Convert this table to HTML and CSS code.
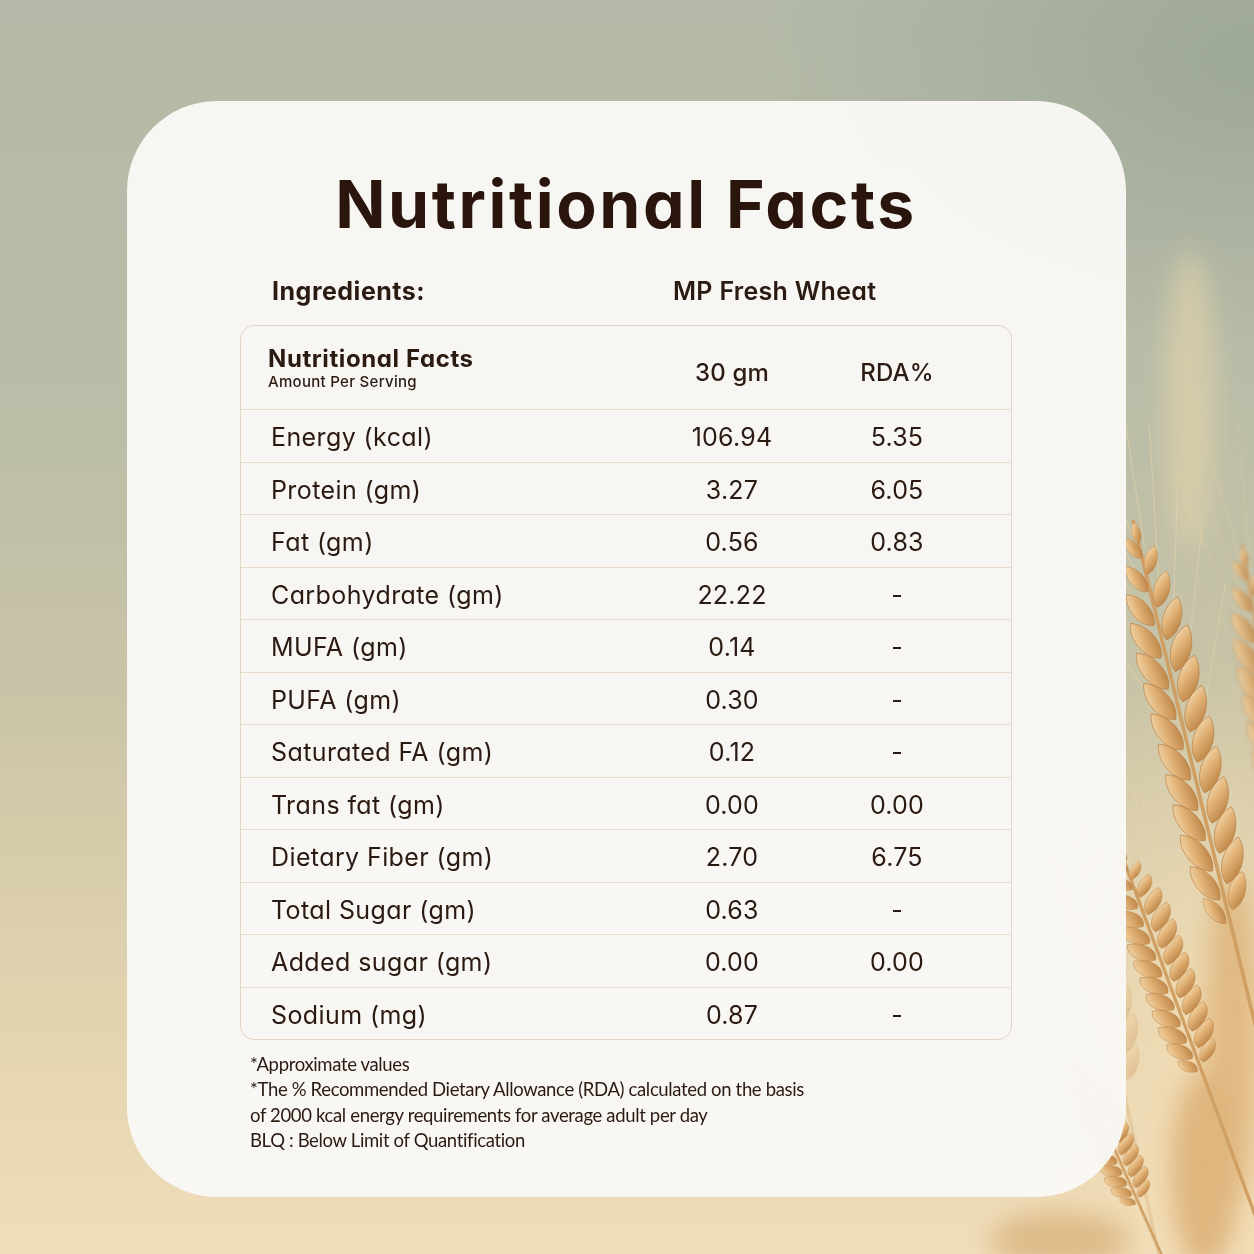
FILE: index.html
```html
<!DOCTYPE html>
<html lang="en">
<head>
<meta charset="utf-8">
<title>Nutritional Facts</title>
<link rel="stylesheet" href="styles.css">
</head>
<body>
<div class="stage">
  <svg class="wheat" width="1254" height="1254" viewBox="0 0 1254 1254" aria-hidden="true">
    <defs>
      <linearGradient id="grain" x1="0" y1="0" x2="1" y2="1">
        <stop offset="0" stop-color="#f9e3bb"/>
        <stop offset=".45" stop-color="#e0b175"/>
        <stop offset="1" stop-color="#b37738"/>
      </linearGradient>
      <filter id="blur" x="-50%" y="-50%" width="200%" height="200%"><feGaussianBlur stdDeviation="12"/></filter>
      <filter id="soft" x="-20%" y="-20%" width="140%" height="140%"><feGaussianBlur stdDeviation="1.5"/></filter>
      <path id="gr" d="M0 -22 C 11 -12 11 10 0 18 C -11 10 -11 -12 0 -22Z"/>
      <g id="ear">
        <path d="M0 0 L0 760" stroke="#cf9f63" stroke-width="3" fill="none"/>
        <g stroke="#efd6ab" stroke-width=".9" fill="none" opacity=".5">
          <path d="M-4 12 L-18 -120"/><path d="M-8 46 L-32 -85"/><path d="M-11 76 L-44 -45"/>
          <path d="M-13 115 L-54 -5"/><path d="M-13 165 L-60 50"/>
          <path d="M4 24 L16 -115"/><path d="M8 60 L32 -75"/><path d="M11 95 L46 -30"/>
          <path d="M13 135 L56 15"/><path d="M13 185 L62 70"/>
        </g>
        <g fill="url(#grain)" stroke="#b47a3e" stroke-width=".5">
          <use href="#gr" transform="translate(0 12) scale(.45)"/>
          <use href="#gr" transform="translate(-5 24) rotate(-28) scale(.55)"/>
          <use href="#gr" transform="translate(6 37) rotate(28) scale(.62)"/>
          <use href="#gr" transform="translate(-8 50) rotate(-28) scale(.7)"/>
          <use href="#gr" transform="translate(9 63) rotate(28) scale(.78)"/>
          <use href="#gr" transform="translate(-11 76) rotate(-28) scale(.86)"/>
          <use href="#gr" transform="translate(11.5 89) rotate(28) scale(.92)"/>
          <use href="#gr" transform="translate(-12.5 102) rotate(-28) scale(.96)"/>
          <use href="#gr" transform="translate(13 115) rotate(28)"/>
          <use href="#gr" transform="translate(-13 128) rotate(-28)"/>
          <use href="#gr" transform="translate(13 141) rotate(28)"/>
          <use href="#gr" transform="translate(-13 154) rotate(-28)"/>
          <use href="#gr" transform="translate(13 167) rotate(28)"/>
          <use href="#gr" transform="translate(-13 180) rotate(-28)"/>
          <use href="#gr" transform="translate(13 193) rotate(28)"/>
          <use href="#gr" transform="translate(-13 206) rotate(-28)"/>
          <use href="#gr" transform="translate(13 219) rotate(28)"/>
          <use href="#gr" transform="translate(-13 232) rotate(-28)"/>
          <use href="#gr" transform="translate(13 245) rotate(28)"/>
          <use href="#gr" transform="translate(-13 258) rotate(-28)"/>
          <use href="#gr" transform="translate(13 271) rotate(28)"/>
          <use href="#gr" transform="translate(-13 284) rotate(-28)"/>
          <use href="#gr" transform="translate(13 297) rotate(28)"/>
          <use href="#gr" transform="translate(-12 310) rotate(-28) scale(.92)"/>
          <use href="#gr" transform="translate(11 322) rotate(28) scale(.82)"/>
          <use href="#gr" transform="translate(-10 334) rotate(-28) scale(.7)"/>
        </g>
      </g>
    </defs>
    <g filter="url(#blur)" opacity=".75">
      <ellipse cx="1190" cy="400" rx="26" ry="150" fill="#dcd0ab"/>
      <ellipse cx="1060" cy="1240" rx="70" ry="28" fill="#d8b07a"/>
      <ellipse cx="1232" cy="1040" rx="26" ry="170" fill="#dcae72"/>
      <ellipse cx="1205" cy="1170" rx="34" ry="100" fill="#d9a96c"/>
    </g>
    <g filter="url(#soft)" opacity=".85">
      <use href="#ear" transform="translate(1242 545) rotate(-10) scale(1.1)"/>
    </g>
    <use href="#ear" opacity=".3" transform="translate(1045 720) rotate(-12) scale(1.1)"/>
    <use href="#ear" transform="translate(1074 1058) rotate(-24) scale(.9 .46)"/>
    <use href="#ear" transform="translate(1120 850) rotate(-20.3) scale(1.1 .68)"/>
    <use href="#ear" transform="translate(1133 520) rotate(-13.6) scale(1.2)"/>
  </svg>

  <main class="card">
    <h1 class="title">Nutritional Facts</h1>
    <div class="ingredients">
      <span class="ing-label">Ingredients:</span>
      <span class="ing-name">MP Fresh Wheat</span>
    </div>

    <div class="table">
      <div class="row head">
        <div class="cell label">
          <div class="head-title">Nutritional Facts</div>
          <div class="head-sub">Amount Per Serving</div>
        </div>
        <div class="cell num head-num">30 gm</div>
        <div class="cell num head-num">RDA%</div>
      </div>
      <div class="row"><div class="cell label">Energy (kcal)</div><div class="cell num">106.94</div><div class="cell num">5.35</div></div>
      <div class="row"><div class="cell label">Protein (gm)</div><div class="cell num">3.27</div><div class="cell num">6.05</div></div>
      <div class="row"><div class="cell label">Fat (gm)</div><div class="cell num">0.56</div><div class="cell num">0.83</div></div>
      <div class="row"><div class="cell label">Carbohydrate (gm)</div><div class="cell num">22.22</div><div class="cell num">-</div></div>
      <div class="row"><div class="cell label">MUFA (gm)</div><div class="cell num">0.14</div><div class="cell num">-</div></div>
      <div class="row"><div class="cell label">PUFA (gm)</div><div class="cell num">0.30</div><div class="cell num">-</div></div>
      <div class="row"><div class="cell label">Saturated FA (gm)</div><div class="cell num">0.12</div><div class="cell num">-</div></div>
      <div class="row"><div class="cell label">Trans fat (gm)</div><div class="cell num">0.00</div><div class="cell num">0.00</div></div>
      <div class="row"><div class="cell label">Dietary Fiber (gm)</div><div class="cell num">2.70</div><div class="cell num">6.75</div></div>
      <div class="row"><div class="cell label">Total Sugar (gm)</div><div class="cell num">0.63</div><div class="cell num">-</div></div>
      <div class="row"><div class="cell label">Added sugar (gm)</div><div class="cell num">0.00</div><div class="cell num">0.00</div></div>
      <div class="row"><div class="cell label">Sodium (mg)</div><div class="cell num">0.87</div><div class="cell num">-</div></div>
    </div>

    <div class="notes">
      <p>*Approximate values</p>
      <p>*The % Recommended Dietary Allowance (RDA) calculated on the basis</p>
      <p>of 2000 kcal energy requirements for average adult per day</p>
      <p>BLQ : Below Limit of Quantification</p>
    </div>
  </main>
</div>
</body>
</html>
```

FILE: styles.css
```css
* { box-sizing: border-box; }

html, body {
  margin: 0;
  padding: 0;
}

body {
  width: 1254px;
  height: 1254px;
  overflow: hidden;
  font-family: Inter, "Noto Sans", sans-serif;
  font-feature-settings: "cv11" 1;
  color: #2b1a12;
}

.stage {
  position: relative;
  width: 1254px;
  height: 1254px;
  overflow: hidden;
  padding: 101px 0 0 127px;
  background:
    radial-gradient(ellipse 220px 420px at 1230px 1080px, rgba(244, 222, 182, 0.9), rgba(244, 222, 182, 0)),
    radial-gradient(ellipse 500px 300px at 1254px 60px, rgba(148, 160, 146, 0.7), rgba(148, 160, 146, 0)),
    linear-gradient(180deg, #b4baa7 0%, #b9bca7 30%, #c9c4a7 55%, #e0d2ae 78%, #f0ddb9 100%);
}

.wheat {
  position: absolute;
  left: 0;
  top: 0;
  z-index: 0;
}

.card {
  position: relative;
  z-index: 1;
  width: 999px;
  height: 1096px;
  border-radius: 90px;
  background: rgba(250, 249, 247, 0.95);
  padding: 63px 114px 0 113px;
}

.title {
  margin: 0;
  font-size: 66px;
  line-height: 80px;
  font-weight: 700;
  text-align: center;
  letter-spacing: 2.6px;
  color: #2a150d;
}

.ingredients {
  display: flex;
  align-items: baseline;
  margin-top: 32px;
  height: 30px;
  line-height: 30px;
}

.ing-label {
  width: 433px;
  padding-left: 32px;
  font-size: 25px;
  font-weight: 700;
  letter-spacing: 0.5px;
}

.ing-name {
  font-size: 25px;
  font-weight: 600;
  letter-spacing: 0.3px;
}

.table {
  margin-top: 19px;
  border: 1px solid #e4d4c3;
  border-radius: 14px;
  overflow: hidden;
}

.row {
  display: grid;
  grid-template-columns: 409px 164px 166px 1fr;
  align-items: center;
  height: 52.5px;
  border-top: 1px solid #eadbcb;
}

.row:first-child {
  border-top: 0;
}

.row.head {
  height: 83px;
}

.cell {
  font-size: 25px;
  line-height: 30px;
  font-weight: 400;
  letter-spacing: 0.4px;
}

.cell.label {
  padding-left: 30px;
  padding-top: 3px;
}

.cell.num {
  text-align: center;
  padding-top: 3px;
  letter-spacing: 0.2px;
}

.head .cell.label {
  padding-left: 27px;
  padding-top: 0;
}

.head-title {
  font-size: 24px;
  font-weight: 700;
  line-height: 28px;
  letter-spacing: 0.6px;
}

.head-sub {
  font-size: 15px;
  line-height: 18px;
  font-weight: 500;
  letter-spacing: 0.3px;
}

.head .head-num {
  align-self: start;
  font-size: 24px;
  font-weight: 500;
  padding-top: 32px;
}

.notes {
  margin-top: 12px;
  padding-left: 10px;
  font-family: Lato, "Open Sans", sans-serif;
  font-size: 18.5px;
  line-height: 25.4px;
  letter-spacing: -0.35px;
  color: #2b1a12;
}

.notes p {
  margin: 0;
}
```
